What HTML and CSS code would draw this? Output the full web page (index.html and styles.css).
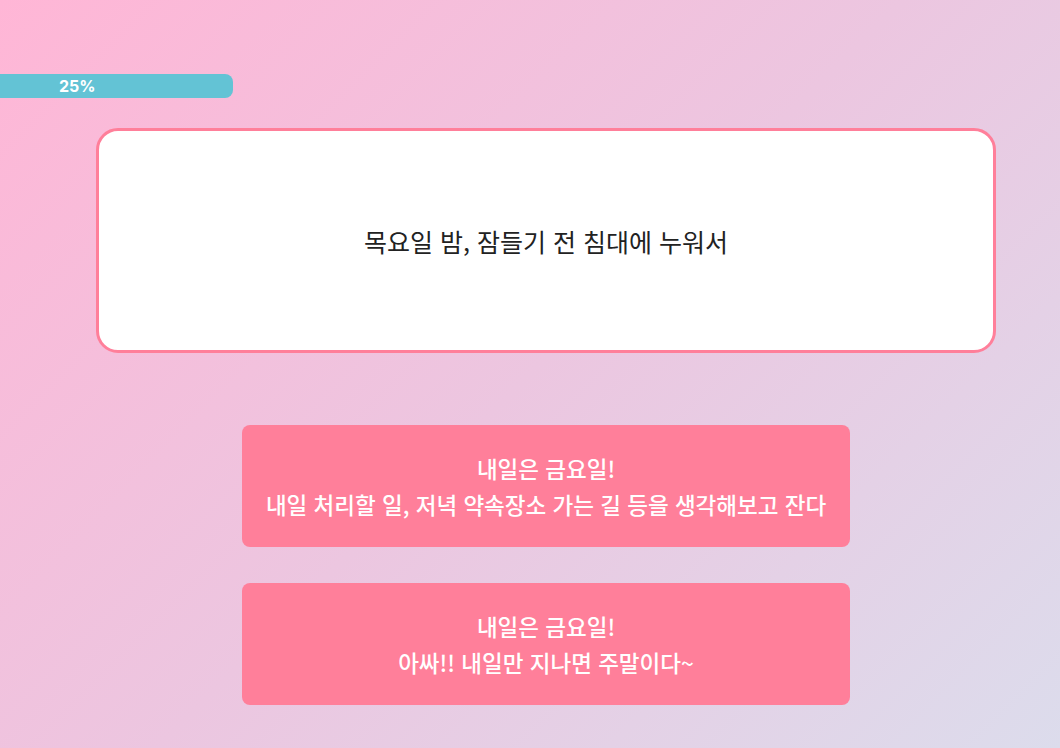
FILE: index.html
```html
<!DOCTYPE html>
<html lang="ko">
<head>
<meta charset="utf-8">
<link rel="stylesheet" href="styles.css">
</head>
<body>
<div class="page">
  <div class="progress"><span class="progress-label">25%</span></div>
  <main class="content">
    <div class="question-card">
      <p class="question">목요일 밤, 잠들기 전 침대에 누워서</p>
    </div>
    <div class="answers">
      <button class="answer">내일은 금요일!<br>내일 처리할 일, 저녁 약속장소 가는 길 등을 생각해보고 잔다</button>
      <button class="answer">내일은 금요일!<br>아싸!! 내일만 지나면 주말이다~</button>
    </div>
  </main>
</div>
</body>
</html>
```

FILE: styles.css
```css
html, body {
  margin: 0;
  padding: 0;
  height: 100%;
}
body {
  background: linear-gradient(135deg, #ffb6d6 0%, #ecc6e0 50%, #dcdcec 100%);
  font-family: "Noto Sans CJK KR", "Noto Sans", sans-serif;
  overflow: hidden;
}
.page {
  padding-top: 74px;
}
.progress {
  width: 233px;
  height: 24px;
  background: #63c3d5;
  border-radius: 0 8px 8px 0;
  display: flex;
  align-items: center;
  padding-left: 59px;
  box-sizing: border-box;
}
.progress-label {
  color: #ffffff;
  font-family: Inter, "Noto Sans", sans-serif;
  font-weight: 700;
  font-size: 16px;
  line-height: 1;
}
.content {
  width: 900px;
  margin: 30px 0 0 96px;
}
.question-card {
  height: 225px;
  box-sizing: border-box;
  background: #ffffff;
  border: 3px solid #ff7f9a;
  border-radius: 22px;
  display: flex;
  align-items: center;
  justify-content: center;
}
.question {
  margin: 0;
  font-size: 25px;
  color: #222222;
  font-weight: 400;
}
.answers {
  margin-top: 72px;
  display: flex;
  flex-direction: column;
  align-items: center;
  gap: 36px;
}
.answer {
  width: 608px;
  height: 122px;
  background: #ff7f9a;
  border: none;
  border-radius: 8px;
  color: #ffffff;
  font-family: "Noto Sans CJK KR", "Noto Sans", sans-serif;
  font-size: 22.5px;
  font-weight: 500;
  line-height: 36px;
  padding: 0;
  text-align: center;
}
```
